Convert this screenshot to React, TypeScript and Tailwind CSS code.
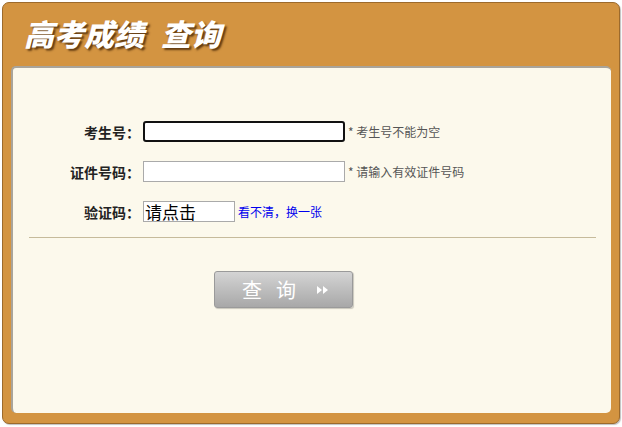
import React from "react";

const cjk = { fontFamily: '"Noto Sans CJK SC", "Noto Sans", sans-serif' };

function Row({ label, children }: { label: string; children: React.ReactNode }) {
  return (
    <div className="flex items-center h-[21px]">
      <div className="w-[127px] text-right text-[14px] font-bold text-[#222] leading-none">{label}</div>
      <div className="ml-[3px] flex items-center">{children}</div>
    </div>
  );
}

export default function App() {
  return (
    <div className="w-[622px] h-[427px] bg-white pt-[2px] pl-[2px]" style={cjk}>
      <div className="w-[618px] h-[422px] rounded-[7px] border border-[#9c6a2c] bg-[#d39441] flex flex-col shadow-[1px_1px_1px_rgba(0,0,0,0.25)]">
        <div className="h-[63px] pl-[21px] pt-[11px] shrink-0">
          <div
            className="flex text-white italic font-extrabold text-[30px] leading-[38px] whitespace-nowrap"
            style={{ textShadow: "2px 2px 2px rgba(60,30,0,0.75)" }}
          >
            <span>高考成绩</span>
            <span className="ml-[17px]">查询</span>
          </div>
        </div>
        <div className="mx-[8px] h-[347px] rounded-[5px] bg-[#fcf9ec] border-t-2 border-l-2 border-[#a9a49a] flex flex-col">
          <div className="h-[53px]" />
          <div className="flex flex-col gap-[19px]">
            <Row label="考生号：">
              <div className="w-[202px] h-[21px] rounded-[3px] border-2 border-[#111] bg-white" />
              <span className="ml-[3px] text-[12px] text-[#555]">* 考生号不能为空</span>
            </Row>
            <Row label="证件号码：">
              <div className="w-[202px] h-[21px] border border-[#aaa] bg-white" />
              <span className="ml-[3px] text-[12px] text-[#555]">* 请输入有效证件号码</span>
            </Row>
            <Row label="验证码：">
              <div className="w-[92px] h-[21px] border border-[#aaa] bg-white text-[17px] leading-[19px] text-black pl-[1px] whitespace-nowrap">请点击</div>
              <span className="ml-[3px] text-[12px] text-[#0000ee]">看不清，换一张</span>
            </Row>
          </div>
          <div className="mt-[15px] ml-[16px] w-[567px] h-px bg-[#c6bb9b]" />
          <div className="mt-[33px] ml-[201px]">
            <div className="w-[139px] h-[37px] rounded-[3px] border border-[#9a9a9a] bg-gradient-to-b from-[#d4d4d4] to-[#a8a8a8] flex items-center shadow-[1px_1px_1px_rgba(0,0,0,0.2)]">
              <span className="ml-[27px] text-white text-[20px] leading-none tracking-[14px]">查询</span>
              <svg className="ml-[6px]" width="13" height="10" viewBox="0 0 13 10">
                <path d="M1 1 L6 5 L1 9 Z" fill="#fff" />
                <path d="M7 1 L12 5 L7 9 Z" fill="#fff" />
              </svg>
            </div>
          </div>
        </div>
      </div>
    </div>
  );
}
